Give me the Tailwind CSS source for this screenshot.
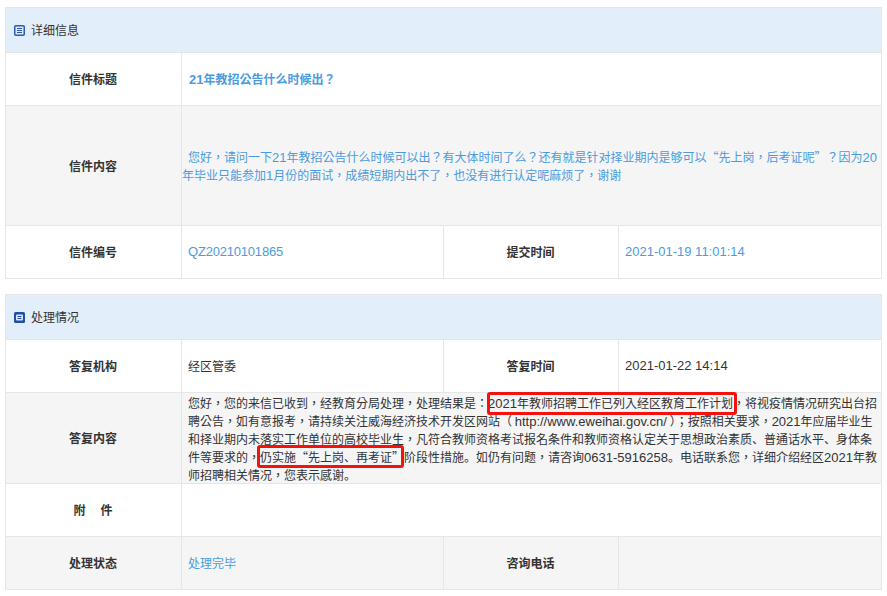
<!DOCTYPE html>
<html lang="zh-Hant">
<head>
  <meta charset="UTF-8" />
  <title>详细信息</title>
  <script src="https://cdn.jsdelivr.net/npm/@tailwindcss/browser@4"></script>
</head>
<body class="bg-white text-[#333] text-[12px] leading-[18px] font-['Noto_Sans_CJK_TC','Liberation_Sans',sans-serif] w-[887px] h-[596px] overflow-hidden">
  <main class="pt-[7px] pl-[5px] w-[882px]">

    <!-- 详细信息 -->
    <section class="border border-[#e6e6e6]">
      <div class="h-[45px] bg-[#e2eefa] border-b border-[#e6e6e6] flex items-center pl-[8px] gap-[6px]">
        <svg width="11" height="11" viewBox="0 0 11 11"><rect x="0.75" y="0.75" width="9.5" height="9.5" rx="1" fill="#dbe6f6" stroke="#2a5db0" stroke-width="1.5"/><path d="M3 3.5h5M3 5.5h5M3 7.5h5" stroke="#2a5db0"/></svg>
        <h2>详细信息</h2>
      </div>
      <div class="grid grid-cols-[176px_262px_175px_1fr] grid-rows-[52px_119px_52px] gap-y-px bg-[#e6e6e6]">
        <div class="bg-white border-r border-[#e6e6e6] flex items-center justify-center pr-px font-bold">信件标题</div>
        <div class="col-span-3 bg-white flex items-center px-[7px] text-[#4a9be0] font-bold"><span><span class="font-['Liberation_Sans'] text-[13px] leading-none">21</span>年教招公告什么时候出？</span></div>

        <div class="bg-[#f5f5f5] border-r border-[#e6e6e6] flex items-center justify-center pr-px font-bold">信件内容</div>
        <div class="col-span-3 bg-[#f5f5f5] flex items-center text-[#4a9be0]"><p class="indent-[6px] mt-px">您好，请问一下<span class="font-['Liberation_Sans'] text-[13px] leading-none">21</span>年教招公告什么时候可以出？有大体时间了么？还有就是针对择业期内是够可以“先上岗，后考证呢”？因为<span class="font-['Liberation_Sans'] text-[13px] leading-none">20</span>年毕业只能参加<span class="font-['Liberation_Sans'] text-[13px] leading-none">1</span>月份的面试，成绩短期内出不了，也没有进行认定呢麻烦了，谢谢</p></div>

        <div class="bg-white border-r border-[#e6e6e6] flex items-center justify-center pr-px font-bold">信件编号</div>
        <div class="bg-white border-r border-[#e6e6e6] flex items-center px-[6px] text-[#4a9be0] font-['Liberation_Sans'] text-[13px] tracking-[-0.2px]">QZ20210101865</div>
        <div class="bg-white border-r border-[#e6e6e6] flex items-center justify-center pr-px font-bold">提交时间</div>
        <div class="bg-white flex items-center px-[6px] text-[#4a9be0] font-['Liberation_Sans'] text-[13px]">2021-01-19 11:01:14</div>
      </div>
    </section>

    <!-- 处理情况 -->
    <section class="border border-[#e6e6e6] mt-[15px] relative">
      <div class="h-[45px] bg-[#e2eefa] border-b border-[#e6e6e6] flex items-center pl-[8px] gap-[6px]">
        <svg width="11" height="11" viewBox="0 0 11 11"><rect width="11" height="11" rx="1.5" fill="#1f4fa8"/><rect x="2" y="2.5" width="7" height="6" rx="1" fill="#dfe8f6"/><path d="M3.5 4.5h4M3.5 6.5h4" stroke="#1f4fa8"/></svg>
        <h2>处理情况</h2>
      </div>
      <div class="grid grid-cols-[176px_262px_175px_1fr] grid-rows-[52px_90px_52px_52px] gap-y-px bg-[#e6e6e6]">
        <div class="bg-white border-r border-[#e6e6e6] flex items-center justify-center pr-px font-bold">答复机构</div>
        <div class="bg-white border-r border-[#e6e6e6] flex items-center px-[6px]">经区管委</div>
        <div class="bg-white border-r border-[#e6e6e6] flex items-center justify-center pr-px font-bold">答复时间</div>
        <div class="bg-white flex items-center px-[6px] font-['Liberation_Sans'] text-[13px]">2021-01-22 14:14</div>

        <div class="bg-[#f5f5f5] border-r border-[#e6e6e6] flex items-center justify-center pr-px font-bold">答复内容</div>
        <div class="col-span-3 bg-[#f5f5f5] pl-[6px] pt-px">您好，您的来信已收到，经教育分局处理，处理结果是：<span class="font-['Liberation_Sans'] text-[13px] leading-none">2021</span>年教师招聘工作已列入经区教育工作计划，将视疫情情况研究出台招聘公告，如有意报考，请持续关注威海经济技术开发区网站（ <span class="font-['Liberation_Sans'] text-[13px] leading-none">http://www.eweihai.gov.cn/</span> ）；按照相关要求，<span class="font-['Liberation_Sans'] text-[13px] leading-none">2021</span>年应届毕业生和择业期内未落实工作单位的高校毕业生，凡符合教师资格考试报名条件和教师资格认定关于思想政治素质<span lang="zh-Hans" class="font-['Noto_Sans_CJK_SC'] leading-none">、</span>普通话水平<span lang="zh-Hans" class="font-['Noto_Sans_CJK_SC'] leading-none">、</span>身体条件等要求的，仍实施“先上岗<span lang="zh-Hans" class="font-['Noto_Sans_CJK_SC'] leading-none">、</span>再考证”阶段性措施<span lang="zh-Hans" class="font-['Noto_Sans_CJK_SC'] leading-none">。</span>如仍有问题，请咨询<span class="font-['Liberation_Sans'] text-[13px] leading-none">0631-5916258</span><span lang="zh-Hans" class="font-['Noto_Sans_CJK_SC'] leading-none">。</span>电话联系您，详细介绍经区<span class="font-['Liberation_Sans'] text-[13px] leading-none">2021</span>年教师招聘相关情况，您表示感谢<span lang="zh-Hans" class="font-['Noto_Sans_CJK_SC'] leading-none">。</span></div>

        <div class="bg-white border-r border-[#e6e6e6] flex items-center justify-center gap-[15px] pr-px font-bold"><span>附</span><span>件</span></div>
        <div class="col-span-3 bg-white"></div>

        <div class="bg-[#f5f5f5] border-r border-[#e6e6e6] flex items-center justify-center pr-px font-bold">处理状态</div>
        <div class="bg-[#f5f5f5] border-r border-[#e6e6e6] flex items-center px-[6px] text-[#4a9be0]">处理完毕</div>
        <div class="bg-[#f5f5f5] border-r border-[#e6e6e6] flex items-center justify-center pr-px font-bold">咨询电话</div>
        <div class="bg-[#f5f5f5]"></div>
      </div>
      <!-- 截图上的红色标注框 -->
      <div class="absolute left-[481px] top-[97px] w-[250px] h-[23px] border-[3px] border-[#f5120c] rounded-[3px]"></div>
      <div class="absolute left-[251px] top-[150px] w-[147px] h-[23px] border-[3px] border-[#f5120c] rounded-[3px]"></div>
    </section>
  </main>
</body>
</html>
